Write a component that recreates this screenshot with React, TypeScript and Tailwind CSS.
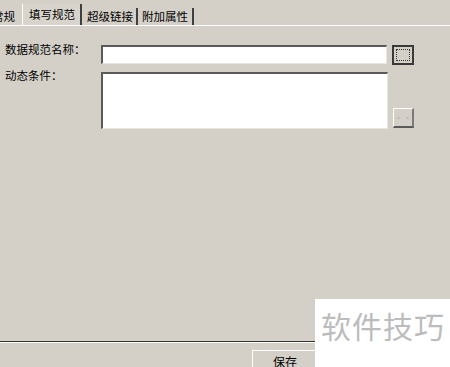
import React from 'react';

const font = { fontFamily: '"Noto Sans CJK SC", "Noto Sans", sans-serif' };

export default function App() {
  return (
    <div className="w-[450px] h-[367px] bg-[#d4d0c8] relative overflow-hidden" style={font}>
      {/* tab strip */}
      <div className="flex items-end h-[26px] pt-[4px] -ml-[8px] border-b border-white text-[11.5px] text-black">
        <div className="h-[17px] flex items-center pr-[7px]">常规</div>
        <div className="h-[21px] flex items-center pl-[6px] pr-[5px] border-l border-white border-r-2 border-r-[#404040] bg-[#d8d4cc]">
          填写规范
        </div>
        <div className="h-[17px] flex items-center pl-[5px] pr-[3px] border-r-2 border-[#404040]">超级链接</div>
        <div className="h-[17px] flex items-center pl-[4px] pr-[4px] border-r-2 border-[#404040]">附加属性</div>
      </div>

      {/* form */}
      <div className="flex flex-col gap-[7px] pt-[19px] pl-[5px] text-[11.5px] text-black">
        <div className="flex items-start">
          <div className="w-[96px] leading-[14px] -mt-[3px]">数据规范名称：</div>
          <div className="w-[286px] h-[19px] bg-white border-t-2 border-l-2 border-[#5a5a5a] border-b border-r border-b-[#e8e6e0] border-r-[#e8e6e0]" />
          <button className="ml-[5px] w-[22px] h-[20px] bg-[#d4d0c8] border-2 border-[#3a3a3a] flex items-center justify-center p-0">
            <div className="w-[14px] h-[12px] border border-dotted border-[#333]" />
          </button>
        </div>
        <div className="flex items-start">
          <div className="w-[96px] leading-[14px] -mt-[4px]">动态条件：</div>
          <div className="w-[287px] h-[57px] bg-white border-t-2 border-l-2 border-[#5a5a5a] border-b border-r border-b-[#e8e6e0] border-r-[#e8e6e0]" />
          <div className="ml-[5px] mt-[36px] w-[21px] h-[20px] bg-[#d4d0c8] border border-t-white border-l-white border-b-2 border-r-2 border-b-[#5a5a5a] border-r-[#7a7a7a] flex items-center justify-center">
            <span className="text-[9px] text-[#b8b4ac] leading-none">··</span>
          </div>
        </div>
      </div>

      {/* bottom separator and save button */}
      <div className="absolute left-0 right-0 top-[341px] border-t border-[#333] border-b border-b-white" />
      <div className="absolute left-[252px] top-[350px] w-[66px] h-[22px] border border-t-white border-l-white border-[#888] bg-[#d4d0c8] flex items-start justify-center pt-[2px]">
        <span className="text-[12px] text-black">保存</span>
      </div>

      {/* watermark */}
      <div className="absolute left-[315px] top-[299px] w-[135px] h-[68px] bg-white flex items-start pl-[6px] pt-[6px]">
        <span className="text-[30px] text-[#bcbcbc] leading-[40px] tracking-[1px]">软件技巧</span>
      </div>
    </div>
  );
}
